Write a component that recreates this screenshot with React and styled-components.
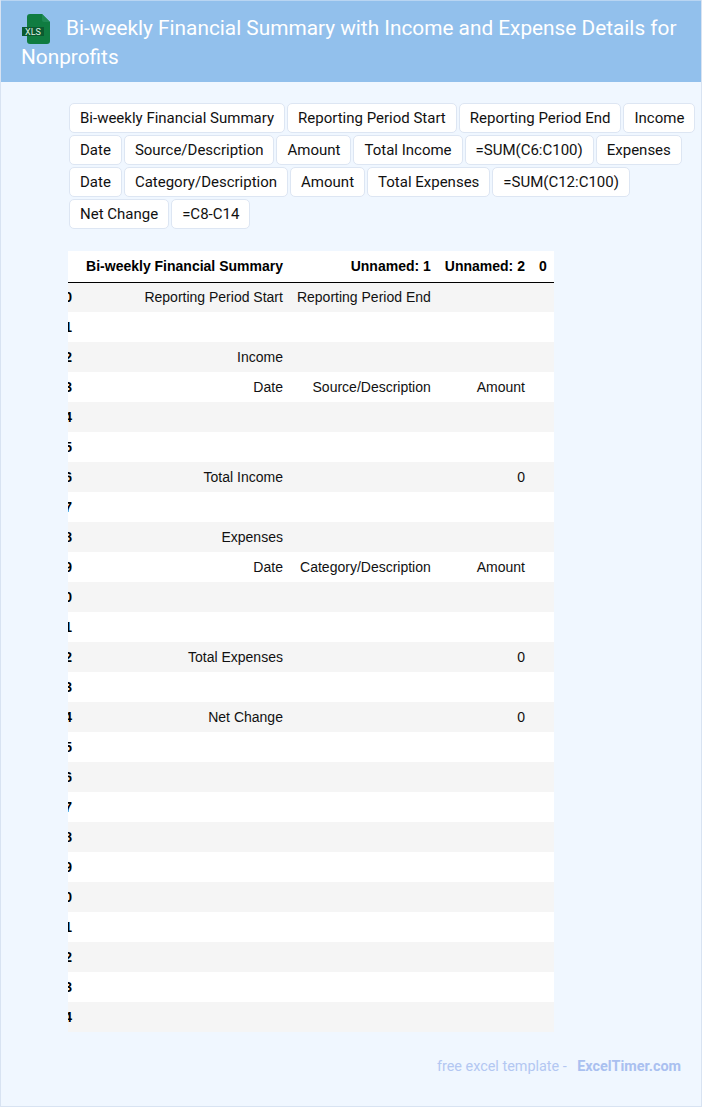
import React from 'react';
import styled, { createGlobalStyle } from 'styled-components';

const GlobalStyle = createGlobalStyle`
  html, body {
    margin: 0;
    padding: 0;
    background: #ffffff;
  }
  * {
    box-sizing: border-box;
  }
`;

const Page = styled.div`
  width: 702px;
  height: 1107px;
  display: flex;
  flex-direction: column;
  background: #f0f7ff;
  border: 1px solid #d8e3f2;
  border-top: 0;
  font-family: Roboto, sans-serif;
`;

const Header = styled.header`
  height: 82px;
  padding: 13px 20px 0 20px;
  background: #92c0ec;
  border-top: 1px solid #b9d5f2;
`;

const Title = styled.h1`
  margin: 0;
  font-size: 20.8px;
  font-weight: 400;
  line-height: 29px;
  color: #ffffff;
`;

const FileIcon = styled.svg`
  width: 30px;
  height: 30px;
  margin-right: 15px;
  margin-bottom: -4px;
  vertical-align: -5px;
`;

const Tags = styled.div`
  display: flex;
  flex-wrap: wrap;
  gap: 2px;
  margin: 21px 0 0 68px;
`;

const Tag = styled.span`
  height: 30px;
  padding: 0 10px;
  display: flex;
  align-items: center;
  font-size: 15px;
  color: #111111;
  background: #ffffff;
  border: 1px solid #dde6f3;
  border-radius: 5px;
`;

const TableClip = styled.div`
  width: 487px;
  margin: 22px 0 0 67px;
  overflow: hidden;
`;

const Table = styled.table`
  margin-left: -18.5px;
  border-collapse: collapse;
  font-family: "Liberation Sans", Arial, sans-serif;
  font-size: 14px;
  color: #111111;
  white-space: nowrap;
`;

const HeadCell = styled.th`
  height: 31px;
  padding: 0 7px;
  text-align: right;
  font-weight: 700;
  color: #000000;
  background: #ffffff;
  border-bottom: 1px solid #000000;
`;

const Row = styled.tr`
  height: 30px;
  background: ${props => (props.$odd ? '#ffffff' : '#f5f5f5')};
`;

const IndexCell = styled.th`
  padding: 0 7px;
  text-align: right;
  font-weight: 700;
  color: #000000;
`;

const Cell = styled.td`
  padding: 0 7px;
  text-align: right;
`;

const Footer = styled.footer`
  margin-top: 27px;
  padding-right: 20px;
  text-align: right;
  font-size: 14.4px;
  line-height: 16px;
  color: #b3c7f2;
`;

const FooterLink = styled.strong`
  margin-left: 7px;
  font-weight: 700;
  color: #a9c0f0;
`;

const tags = [
  'Bi-weekly Financial Summary', 'Reporting Period Start', 'Reporting Period End', 'Income',
  'Date', 'Source/Description', 'Amount', 'Total Income', '=SUM(C6:C100)', 'Expenses',
  'Date', 'Category/Description', 'Amount', 'Total Expenses', '=SUM(C12:C100)',
  'Net Change', '=C8-C14',
];

const columns = ['Bi-weekly Financial Summary', 'Unnamed: 1', 'Unnamed: 2', '0'];

const filled = {
  0: ['Reporting Period Start', 'Reporting Period End', '', ''],
  2: ['Income', '', '', ''],
  3: ['Date', 'Source/Description', 'Amount', ''],
  6: ['Total Income', '', '0', ''],
  8: ['Expenses', '', '', ''],
  9: ['Date', 'Category/Description', 'Amount', ''],
  12: ['Total Expenses', '', '0', ''],
  14: ['Net Change', '', '0', ''],
};

const rows = Array.from({ length: 25 }, (_, i) => filled[i] || ['', '', '', '']);

const App = () => (
  <>
    <GlobalStyle />
    <Page>
      <Header>
        <Title>
          <FileIcon viewBox="0 0 30 30" aria-hidden="true">
            <path d="M6 3a3 3 0 0 1 3-3h12l8 8v19a3 3 0 0 1-3 3H9a3 3 0 0 1-3-3z" fill="#107c41" />
            <path d="M21 0l8 8h-6a2 2 0 0 1-2-2z" fill="#1f8a54" />
            <rect x="1" y="13" width="22" height="9" fill="#0b5a30" />
            <text x="12" y="20.8" textAnchor="middle" fontFamily="Roboto, sans-serif" fontSize="9" fill="#dff2e6">XLS</text>
          </FileIcon>
          Bi-weekly Financial Summary with Income and Expense Details for Nonprofits
        </Title>
      </Header>

      <Tags>
        {tags.map((tag, i) => <Tag key={i}>{tag}</Tag>)}
      </Tags>

      <TableClip>
        <Table>
          <thead>
            <tr>
              <HeadCell />
              {columns.map(col => <HeadCell key={col}>{col}</HeadCell>)}
            </tr>
          </thead>
          <tbody>
            {rows.map((row, i) => (
              <Row key={i} $odd={i % 2 === 1}>
                <IndexCell>{i}</IndexCell>
                {row.map((value, j) => <Cell key={j}>{value}</Cell>)}
              </Row>
            ))}
          </tbody>
        </Table>
      </TableClip>

      <Footer>
        free excel template - <FooterLink>ExcelTimer.com</FooterLink>
      </Footer>
    </Page>
  </>
);

export default App;
